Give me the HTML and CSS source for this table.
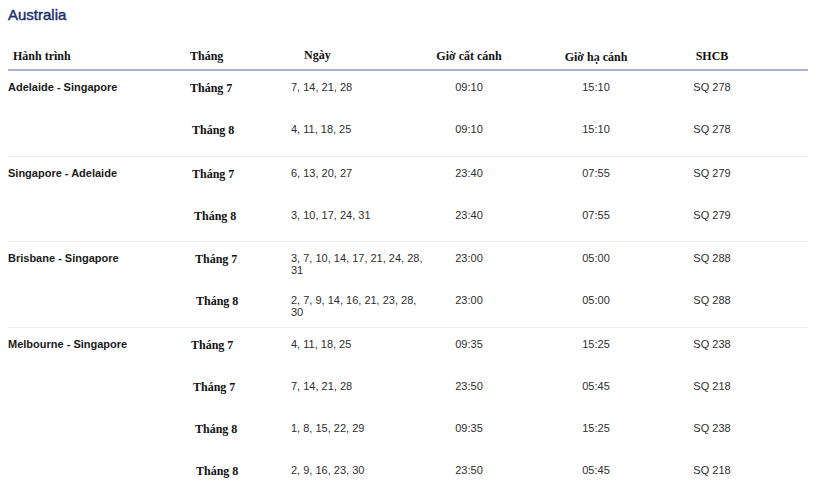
FILE: index.html
```html
<!DOCTYPE html>
<html lang="vi">
<head>
<meta charset="utf-8">
<title>Australia</title>
<link rel="stylesheet" href="styles.css">
</head>
<body>
<h2 class="title">Australia</h2>
<div class="table">
  <div class="thead">
    <div class="th th-route">Hành trình</div>
    <div class="th th-month">Tháng</div>
    <div class="th th-days up">Ngày</div>
    <div class="th center">Giờ cất cánh</div>
    <div class="th center down">Giờ hạ cánh</div>
    <div class="th center">SHCB</div>
    <div class="th"></div>
  </div>

  <div class="group">
    <div class="route r2">Adelaide - Singapore</div>
    <div class="month m0">Tháng 7</div><div class="days">7, 14, 21, 28</div><div class="time">09:10</div><div class="time">15:10</div><div class="time">SQ 278</div><div class="empty"></div>
    <div class="month m2">Tháng 8</div><div class="days">4, 11, 18, 25</div><div class="time">09:10</div><div class="time">15:10</div><div class="time">SQ 278</div><div class="empty"></div>
  </div>

  <div class="group">
    <div class="route r2">Singapore - Adelaide</div>
    <div class="month m2">Tháng 7</div><div class="days">6, 13, 20, 27</div><div class="time">23:40</div><div class="time">07:55</div><div class="time">SQ 279</div><div class="empty"></div>
    <div class="month m4">Tháng 8</div><div class="days">3, 10, 17, 24, 31</div><div class="time">23:40</div><div class="time">07:55</div><div class="time">SQ 279</div><div class="empty"></div>
  </div>

  <div class="group">
    <div class="route r2">Brisbane - Singapore</div>
    <div class="month m5">Tháng 7</div><div class="days">3, 7, 10, 14, 17, 21, 24, 28,<br>31</div><div class="time">23:00</div><div class="time">05:00</div><div class="time">SQ 288</div><div class="empty"></div>
    <div class="month m6">Tháng 8</div><div class="days">2, 7, 9, 14, 16, 21, 23, 28,<br>30</div><div class="time">23:00</div><div class="time">05:00</div><div class="time">SQ 288</div><div class="empty"></div>
  </div>

  <div class="group last">
    <div class="route r4">Melbourne - Singapore</div>
    <div class="month m1">Tháng 7</div><div class="days">4, 11, 18, 25</div><div class="time">09:35</div><div class="time">15:25</div><div class="time">SQ 238</div><div class="empty"></div>
    <div class="month m3">Tháng 7</div><div class="days">7, 14, 21, 28</div><div class="time">23:50</div><div class="time">05:45</div><div class="time">SQ 218</div><div class="empty"></div>
    <div class="month m5">Tháng 8</div><div class="days">1, 8, 15, 22, 29</div><div class="time">09:35</div><div class="time">15:25</div><div class="time">SQ 238</div><div class="empty"></div>
    <div class="month m6">Tháng 8</div><div class="days">2, 9, 16, 23, 30</div><div class="time">23:50</div><div class="time">05:45</div><div class="time">SQ 218</div><div class="empty"></div>
  </div>
</div>
</body>
</html>
```

FILE: styles.css
```css
html, body {
  margin: 0;
  padding: 0;
  background: #ffffff;
}

body {
  padding: 6px 14px 0 8px;
  font-family: "Liberation Sans", Arial, sans-serif;
  font-size: 11px;
  color: #2e2e2e;
}

.title {
  margin: 0;
  font-size: 15px;
  line-height: 17px;
  font-weight: normal;
  color: #1a3170;
  -webkit-text-stroke: 0.45px #1a3170;
}

.table {
  width: 800px;
  margin-top: 17px;
}

.thead,
.group {
  display: grid;
  grid-template-columns: 175px 100px 137px 98px 156px 76px 58px;
}

.thead {
  height: 29px;
  border-bottom: 2px solid #a7b1d2;
}

.th {
  padding-top: 9px;
  font-family: "Liberation Serif", "Times New Roman", serif;
  font-weight: bold;
  font-size: 12px;
  line-height: 14px;
  color: #111111;
}

.th.up { padding-top: 8px; }
.th.down { padding-top: 10px; }

.th-route { padding-left: 5px; }
.th-month { padding-left: 7px; }
.th-days { padding-left: 21px; }
.center { text-align: center; }

.group {
  grid-auto-rows: 42.25px;
  border-bottom: 1px solid #ececec;
}

.group.last { border-bottom: none; }

.route {
  grid-column: 1;
  padding-top: 10px;
  font-weight: bold;
  line-height: 12px;
  color: #1a1a1a;
}

.r2 { grid-row: span 2; }
.r4 { grid-row: span 4; }

.month {
  grid-column: 2;
  padding-top: 11px;
  font-family: "Liberation Serif", "Times New Roman", serif;
  font-weight: bold;
  font-size: 12px;
  line-height: 12px;
  color: #111111;
}

.m0 { padding-left: 7px; }
.m1 { padding-left: 8px; }
.m2 { padding-left: 9px; }
.m3 { padding-left: 10px; }
.m4 { padding-left: 11px; }
.m5 { padding-left: 12px; }
.m6 { padding-left: 13px; }

.days {
  padding-top: 10px;
  padding-left: 8px;
  line-height: 12px;
  white-space: nowrap;
}

.time {
  padding-top: 10px;
  line-height: 12px;
  text-align: center;
}
```
